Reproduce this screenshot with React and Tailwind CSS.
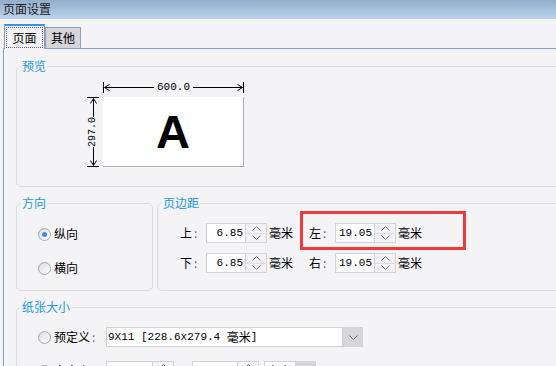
import React from 'react';

const cjk = "font-['Noto_Sans_CJK_SC',sans-serif]";
const mono = "font-['Liberation_Mono',monospace]";

const Chevron = ({ up }) => (
  <svg width="9" height="5" viewBox="0 0 9 5">
    <path d={up ? 'M0.5 4.5 L4.5 0.5 L8.5 4.5' : 'M0.5 0.5 L4.5 4.5 L8.5 0.5'} stroke="#6b6b70" fill="none" />
  </svg>
);

const Spin = () => (
  <div className="flex flex-col w-[21px] h-[20px] border border-l-0 border-[#d2d2d7] bg-[#f3f3f5]">
    <div className="flex-1 flex items-center justify-center border-b border-[#dedee2]">
      <Chevron up />
    </div>
    <div className="flex-1 flex items-center justify-center">
      <Chevron />
    </div>
  </div>
);

const NumField = ({ value, width = 'w-[40px]' }) => (
  <div className="flex">
    <div className={`${width} h-[20px] bg-white border border-[#d2d2d7] flex items-center justify-end pr-[2px] text-[11px] text-black ${mono}`}>
      {value}
    </div>
    <Spin />
  </div>
);

const Radio = ({ checked }) => (
  <span className="w-[13px] h-[13px] rounded-full border border-[#a8a8ad] bg-gradient-to-br from-[#dcdce0] to-white flex items-center justify-center shrink-0">
    {checked && <span className="w-[5px] h-[5px] rounded-full bg-[#3a8de8]" />}
  </span>
);

const Legend = ({ children }) => (
  <legend className="ml-[4px] px-[1px] text-[12px] leading-[14px] text-[#1a98da]">{children}</legend>
);

const Colon = () => <span className="text-[#8a4aa6] ml-[2px]">:</span>;

const MarginItem = ({ label, value }) => (
  <div className="flex items-center">
    <div className="w-[26px] flex items-center text-[12px]">
      {label}
      <Colon />
    </div>
    <NumField value={value} />
    <span className="ml-[2px] text-[12px]">毫米</span>
  </div>
);

const DropBtn = () => (
  <div className="w-[20px] h-[20px] bg-[#d5d5da] flex items-center justify-center">
    <Chevron />
  </div>
);

export default function App() {
  return (
    <div className={`w-[556px] h-[366px] overflow-hidden bg-[#f4f4f6] text-black ${cjk}`}>
      {/* Title */}
      <div className="h-[19px] bg-gradient-to-b from-[#91aecc] to-[#bcd4ec] px-[3px] text-[12px] leading-[18px] text-[#1c1c1c]">
        页面设置
      </div>

      {/* Tabs */}
      <div className="h-[29px] flex items-end pl-[4px]">
        <div className="relative z-10 -mb-px w-[41px] h-[25px] bg-[#f4f4f6] border-x border-[#8b9fbd] border-t-2 border-t-[#3a8ee6] p-[1px]">
          <div className="h-full border border-dotted border-[#5a5aa8] flex items-center justify-center text-[12px]">
            页面
          </div>
        </div>
        <div className="w-[36px] h-[21px] bg-[#d5d5da] border border-b-0 border-[#8b9fbd] flex items-center justify-center text-[12px]">
          其他
        </div>
      </div>

      {/* Tab content */}
      <div className="ml-[3px] w-[640px] h-[320px] border-l border-t border-[#8b9fbd] pl-[12px] pt-[10px] flex flex-col">
        {/* Preview */}
        <fieldset className="w-[620px] border border-[#dcdce2] rounded-[5px]">
          <Legend>预览</Legend>
          <div className="pl-[70px] pt-[8px] pb-[19px]">
            <div className="grid grid-cols-[12px_141px] grid-rows-[12px_70px] gap-[4px]">
              <div />
              <div className="flex items-center h-[12px]">
                <div className="w-px h-[11px] bg-black" />
                <svg width="6" height="7" viewBox="0 0 6 7" className="shrink-0">
                  <path d="M5.5 0.5 L0.5 3.5 L5.5 6.5" stroke="black" fill="none" />
                </svg>
                <div className="flex-1 h-px bg-black -ml-[5px]" />
                <span className={`px-[3px] text-[11px] leading-[12px] ${mono}`}>600.0</span>
                <div className="flex-1 h-px bg-black -mr-[5px]" />
                <svg width="6" height="7" viewBox="0 0 6 7" className="shrink-0">
                  <path d="M0.5 0.5 L5.5 3.5 L0.5 6.5" stroke="black" fill="none" />
                </svg>
                <div className="w-px h-[11px] bg-black" />
              </div>
              <div className="flex flex-col items-center h-[70px]">
                <div className="w-[12px] h-px bg-black" />
                <svg width="7" height="6" viewBox="0 0 7 6" className="shrink-0">
                  <path d="M0.5 5.5 L3.5 0.5 L6.5 5.5" stroke="black" fill="none" />
                </svg>
                <div className="flex-1 w-px bg-black -mt-[5px]" />
                <span className={`py-[3px] text-[10px] leading-[12px] [writing-mode:vertical-rl] [transform:rotate(180deg)] ${mono}`}>297.0</span>
                <div className="flex-1 w-px bg-black -mb-[5px]" />
                <svg width="7" height="6" viewBox="0 0 7 6" className="shrink-0">
                  <path d="M0.5 0.5 L3.5 5.5 L6.5 0.5" stroke="black" fill="none" />
                </svg>
                <div className="w-[12px] h-px bg-black" />
              </div>
              <div className="bg-white border-r border-b border-[#adadb2] flex items-center justify-center">
                <span className="font-['Liberation_Sans',sans-serif] font-bold text-[47px] leading-none">A</span>
              </div>
            </div>
          </div>
        </fieldset>

        {/* Orientation + margins */}
        <div className="flex gap-[4px] mt-[9px]">
          <fieldset className="w-[137px] h-[95px] border border-[#dcdce2] rounded-[5px]">
            <Legend>方向</Legend>
            <div className="pl-[21px] pt-[14px] flex flex-col gap-[14px]">
              <div className="h-[20px] flex items-center gap-[3px] text-[12px]">
                <Radio checked />
                纵向
              </div>
              <div className="h-[20px] flex items-center gap-[3px] text-[12px]">
                <Radio />
                横向
              </div>
            </div>
          </fieldset>

          <fieldset className="relative w-[480px] h-[95px] border border-[#dcdce2] rounded-[5px]">
            <Legend>页边距</Legend>
            <div className="pl-[22px] pt-[13px] flex flex-col gap-[10px]">
              <div className="flex gap-[16px]">
                <MarginItem label="上" value="6.85" />
                <MarginItem label="左" value="19.05" />
              </div>
              <div className="flex gap-[16px]">
                <MarginItem label="下" value="6.85" />
                <MarginItem label="右" value="19.05" />
              </div>
            </div>
            <div className="absolute left-[142px] top-[1px] w-[166px] h-[39px] border-[3px] border-[#ef3a3a]" />
          </fieldset>
        </div>

        {/* Paper size */}
        <fieldset className="mt-[9px] w-[620px] h-[120px] border border-[#dcdce2] rounded-[5px]">
          <Legend>纸张大小</Legend>
          <div className="pl-[21px] pt-[13px] flex flex-col gap-[14px]">
            <div className="h-[20px] flex items-center">
              <Radio />
              <div className="ml-[3px] w-[52px] text-[12px]">
                预定义
                <Colon />
              </div>
              <div className="flex">
                <div className="w-[237px] h-[20px] bg-white border border-[#cfcfd4] flex items-center pl-[1px] text-[11px] whitespace-pre">
                  <span className={mono}>{'9X11 [228.6x279.4 '}</span>
                  <span className="text-[12px]">毫米</span>
                  <span className={mono}>]</span>
                </div>
                <DropBtn />
              </div>
            </div>
            <div className="h-[20px] flex items-center">
              <Radio />
              <div className="ml-[3px] w-[52px] text-[12px]">
                自定义
                <Colon />
              </div>
              <NumField value="210" width="w-[47px]" />
              <div className="w-[18px]" />
              <NumField value="297" width="w-[46px]" />
              <div className="ml-[5px] flex">
                <div className="w-[32px] h-[20px] bg-white border border-[#cfcfd4] text-[12px] flex items-center pl-[2px]">毫米</div>
                <DropBtn />
              </div>
            </div>
          </div>
        </fieldset>
      </div>
    </div>
  );
}
